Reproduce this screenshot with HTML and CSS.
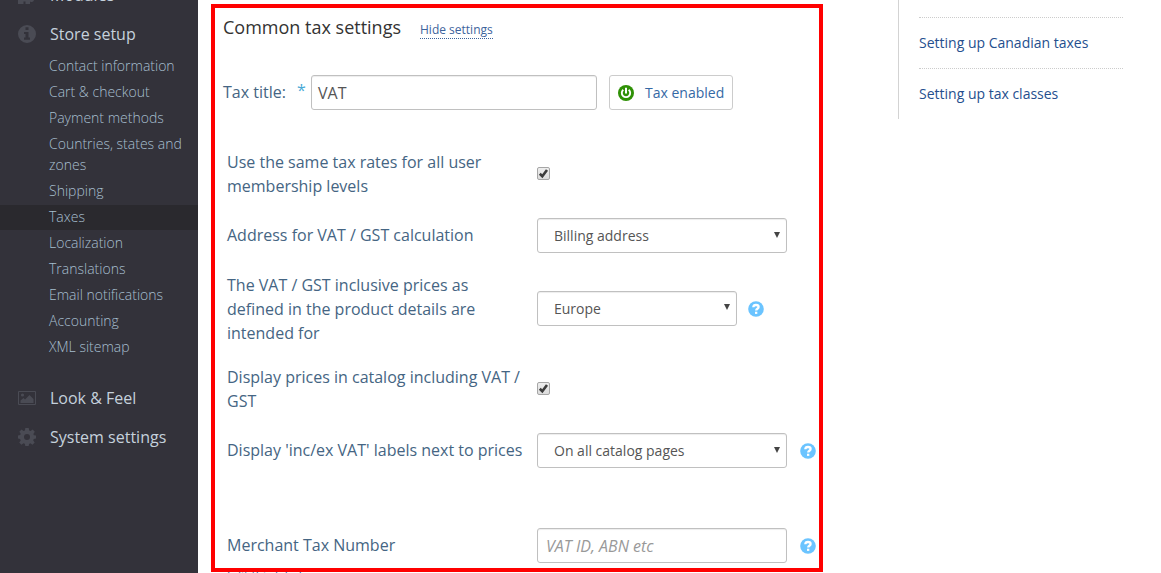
FILE: index.html
```html
<!DOCTYPE html>
<html lang="en">
<head>
<meta charset="utf-8">
<title>Common tax settings</title>
<link rel="stylesheet" href="styles.css">
</head>
<body>
<svg class="defs" width="0" height="0">
  <symbol id="help" viewBox="0 0 16 16">
    <circle cx="8" cy="8" r="7.8" fill="#6bc4ff"/>
    <path d="M5.300 6.300C5.400 4.600 6.600 4 8 4c1.600 0 2.600.8 2.600 2.100 0 1.700-2.400 1.700-2.400 3.400" fill="none" stroke="#fff" stroke-width="2.300"/>
    <rect x="7" y="10.700" width="2.300" height="2.200" fill="#fff"/>
  </symbol>
  <symbol id="check" viewBox="0 0 13 13">
    <path d="M2.800 6.800L5.300 9.200L10 3" fill="none" stroke="#3c3c3c" stroke-width="2.600"/>
  </symbol>
</svg>
<div class="page">
  <nav class="sidebar">
    <div class="head raised">
      <svg class="icon" viewBox="0 0 18 18"><path d="M0 8h5V6.500C3.500 4 8.500 4 7 6.500V8h5v3.500c2.500-1.500 4 .5 4 2s-1.500 3.500-4 2V18H7.500v-2.500h-2V18H0z"/></svg>
      <span>Modules</span>
    </div>
    <div class="head raised">
      <svg class="icon" viewBox="0 0 18 18"><path fill-rule="evenodd" d="M9 0a9 9 0 1 0 0 18A9 9 0 0 0 9 0zM7.500 2.300h3v2.700h-3zM6 7h4.500v5.500H12v2.200H6v-2.200h1.500V9H6z"/></svg>
      <span>Store setup</span>
    </div>
    <ul class="menu">
      <li>Contact information</li>
      <li>Cart &amp; checkout</li>
      <li>Payment methods</li>
      <li>Countries, states and zones</li>
      <li>Shipping</li>
      <li class="active">Taxes</li>
      <li>Localization</li>
      <li>Translations</li>
      <li>Email notifications</li>
      <li>Accounting</li>
      <li>XML sitemap</li>
    </ul>
    <div class="head">
      <svg class="icon" viewBox="0 0 18 18"><path fill-rule="evenodd" d="M1 2h16a1 1 0 0 1 1 1v12a1 1 0 0 1-1 1H1a1 1 0 0 1-1-1V3a1 1 0 0 1 1-1zM1 3v12h16V3z"/><circle cx="4.500" cy="6" r="1.600"/><path d="M2.500 14v-2.500L5.500 9 7 10.500 11.500 6l4 4v4z"/></svg>
      <span>Look &amp; Feel</span>
    </div>
    <div class="head">
      <svg class="icon" viewBox="0 0 18 18"><path fill-rule="evenodd" d="M7.300 0h3.400l.5 2.500 1.300.6 2.200-1.500 2.100 2.200-1.400 2.100.5 1.300 2.100.4v3l-2.200.5-.6 1.300 1.500 2.200-2.200 2.200-2.200-1.500-1.200.6-.5 2.100H7.300l-.5-2.200-1.300-.5-2.100 1.400-2.200-2.100 1.500-2.200-.6-1.300L0 10.600v-3l2.200-.5.5-1.300-1.400-2.100 2.200-2.200 2.100 1.500 1.300-.5zM9 6a3 3 0 1 0 0 6 3 3 0 0 0 0-6z"/></svg>
      <span>System settings</span>
    </div>
  </nav>

  <main class="content">
    <div class="title-row">
      <h2>Common tax settings</h2>
      <a class="toggle">Hide settings</a>
    </div>
    <div class="tax-title">
      <label>Tax title:</label>
      <span class="star">*</span>
      <div class="field name">VAT</div>
      <div class="enabled">
        <svg width="16" height="16" viewBox="0 0 16 16"><circle cx="8" cy="8" r="8" fill="#2f9106"/><path d="M5.300 4.700a4.200 4.200 0 1 0 5.400 0" fill="none" stroke="#fff" stroke-width="1.900"/><path d="M8 2.800v5.700" stroke="#fff" stroke-width="2"/></svg>
        <span>Tax enabled</span>
      </div>
    </div>
    <div class="rows">
      <div class="row r1"><label>Use the same tax rates for all user membership levels</label><span class="checkbox"><svg viewBox="0 0 13 13"><use href="#check"/></svg></span></div>
      <div class="row r2"><label>Address for VAT / GST calculation</label><div class="field select">Billing address<i class="arrow"></i></div></div>
      <div class="row r3"><label>The VAT / GST inclusive prices as defined in the product details are intended for</label><div class="field select short">Europe<i class="arrow"></i></div><svg class="help near"><use href="#help"/></svg></div>
      <div class="row r4"><label>Display prices in catalog including VAT / GST</label><span class="checkbox"><svg viewBox="0 0 13 13"><use href="#check"/></svg></span></div>
      <div class="row r5"><label>Display 'inc/ex VAT' labels next to prices</label><div class="field select">On all catalog pages<i class="arrow"></i></div><svg class="help"><use href="#help"/></svg></div>
      <div class="row r6"><label>Merchant Tax Number</label><div class="field placeholder">VAT ID, ABN etc</div><svg class="help"><use href="#help"/></svg></div>
    </div>
    <a class="edit">Edit this label</a>
    <div class="frame"></div>
  </main>

  <aside class="links">
    <a>Setting up Canadian taxes</a>
    <a>Setting up tax classes</a>
  </aside>
</div>
</body>
</html>
```

FILE: styles.css
```css
* { box-sizing: border-box; }
body {
  margin: 0;
  height: 573px;
  overflow: hidden;
  background: #fff;
  font-family: "Open Sans", sans-serif;
  font-size: 16px;
}
.defs { display: none; }
.page { display: flex; height: 573px; overflow: hidden; }

.sidebar { width: 198px; flex: none; background: #33323a; margin-top: -24px; height: 597px; }
.head { height: 39px; display: flex; align-items: center; gap: 14px; padding-left: 18px; color: #c5d1dc; line-height: 24px; }
.raised { padding-bottom: 2px; }
.icon { width: 18px; height: 18px; fill: #4a4b54; }
.menu { list-style: none; margin: 0 0 18px; padding: 0; font-size: 14px; font-weight: 300; line-height: 21px; color: #a7bfcf; }
.menu li { padding: 1px 10px 3px 49px; margin-bottom: 1px; }
.menu .active { background: #2a292e; }

.content { position: relative; width: 700px; flex: none; padding: 15px 0 0 25px; }
.title-row { display: flex; align-items: baseline; gap: 19px; height: 60px; }
h2 { margin: 0; font-size: 18px; font-weight: 400; line-height: 25px; color: #333; }
.toggle { font-size: 12px; line-height: 16px; color: #3c639c; border-bottom: 1px dotted #3c639c; }
.tax-title { display: flex; align-items: center; height: 35px; color: #456583; }
.tax-title label { width: 74px; padding-bottom: 2px; }
.star { width: 14px; padding-bottom: 6px; color: #48a9d6; line-height: 24px; }
.field { height: 35px; border: 1px solid #c0c0c0; border-radius: 3px; box-shadow: inset 0 1px 1px rgba(0,0,0,.075); color: #555; line-height: 33px; }
.name { width: 286px; padding-left: 6px; line-height: 35px; }
.enabled { display: flex; align-items: center; gap: 11px; width: 124px; height: 35px; margin-left: 12px; padding-left: 8px; border: 1px solid #ccc; border-radius: 3px; font-size: 14px; color: #3569a5; }

.rows { padding: 40px 0 0 4px; }
.row { display: flex; align-items: center; color: #456583; line-height: 24px; }
.row label { width: 310px; padding-right: 12px; flex: none; }
.r1 { height: 48px; }
.r2 { margin-top: 20px; height: 35px; }
.r3 { margin-top: 20px; height: 72px; }
.r4 { margin-top: 20px; height: 48px; }
.r5 { margin-top: 20px; height: 35px; }
.r5 label { padding-right: 0; }
.r6 { margin-top: 60px; height: 35px; }
.r2 label, .r5 label, .r6 label { padding-bottom: 2px; }
.checkbox { width: 13px; height: 13px; margin-bottom: 2px; border: 1px solid #a6a6a6; border-radius: 2px; background: linear-gradient(#eee, #dcdcdc); }
.checkbox svg { display: block; width: 13px; height: 13px; margin: -1px; }
.select { display: flex; align-items: center; justify-content: space-between; width: 250px; padding: 0 6px 0 16px; font-size: 14px; }
.short { width: 200px; margin-bottom: 2px; }
.arrow { border: 3px solid transparent; border-top: 6px solid #444; border-bottom: 0; margin-bottom: 2px; }
.placeholder { width: 250px; padding-left: 8px; font-style: italic; color: #999; line-height: 35px; }
.help { width: 16px; height: 16px; margin: 1px 0 0 13px; }
.near { margin-left: 11px; margin-top: 0; }
.edit { display: block; padding: 5px 0 0 4px; font-size: 12px; line-height: 16px; color: #3569a5; }
.frame { position: absolute; left: 13px; top: 4px; width: 612px; height: 568px; border: 4px solid #f00; }

.links { width: 225px; height: 119px; padding: 17px 0 0 20px; border-left: 1px solid #d3d3d3; font-size: 14px; color: #254f8e; }
.links a { display: block; height: 51px; border-top: 1px dotted #ccc; line-height: 50px; }
```
